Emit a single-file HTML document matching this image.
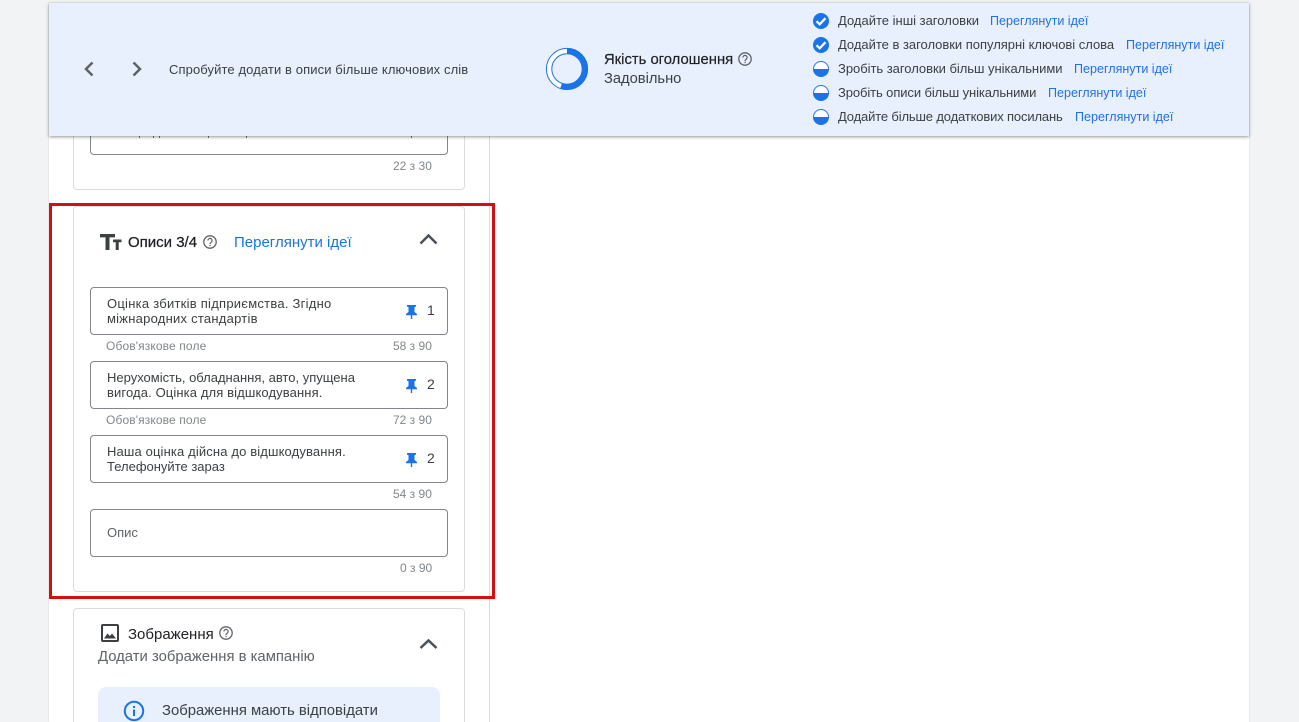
<!DOCTYPE html>
<html lang="uk"><head><meta charset="utf-8"><title>Оголошення</title>
<style>
html,body{margin:0;padding:0;overflow:hidden;width:1299px;height:722px}
#w{position:relative;width:1299px;height:722px;overflow:hidden;background:#f1f3f4;font-family:"Liberation Sans",Arial,sans-serif;color:#3c4043}
.a{position:absolute;white-space:nowrap}
.t{font-size:13px;line-height:16px;color:#3c4043}
.l{font-size:12.55px;line-height:16px;color:#1a73e8}
.c{font-size:12px;line-height:14px;color:#80868b}
.box{position:absolute;left:90px;width:356px;height:46px;border:1px solid #80868b;border-radius:4px;background:#fff}
.card{position:absolute;left:73px;width:390px;border:1px solid #dadce0;border-radius:4px;background:#fff}
.m{position:absolute;top:136px;width:1px;height:2px;background:#5f6368}
svg{position:absolute;display:block}
</style></head><body><div id="w">
<div class="a" style="left:49px;top:3px;width:1200px;height:719px;background:#fff;box-shadow:0 0 1px #bdc1c6"></div>
<div class="a" style="left:489px;top:136px;width:1px;height:586px;background:#dadce0"></div>

<div class="card" style="top:100px;height:88px"></div>
<div class="box" style="top:100px;height:53px"></div>
<div class="m" style="left:139px"></div><div class="m" style="left:153px"></div><div class="m" style="left:159px"></div><div class="m" style="left:208px"></div><div class="m" style="left:246px"></div><div class="m" style="left:411px;background:#1a73e8"></div>
<div class="a c" style="left:393px;top:159px">22 з 30</div>

<div class="card" style="top:206px;height:384px"></div>
<svg style="left:99px;top:233px" width="23" height="18" viewBox="0 0 23 18"><path d="M1 1h15v3.400h-5.500V17H6.500V4.400H1z M14 6.500h8.500v2.700h-2.800V17h-3V9.200H14z" fill="#3c4043"/></svg>
<div class="a" style="left:128px;top:235px;font-size:15px;line-height:16px;color:#202124;-webkit-text-stroke:.25px #202124">Описи 3/4</div>
<svg style="left:202px;top:234px" width="16" height="16" viewBox="0 0 16 16"><circle cx="8" cy="8" r="6.200" fill="none" stroke="#5f6368" stroke-width="1.300"/><path d="M5.900 6.500a2.100 2.100 0 1 1 3.400 1.600c-.8.600-1.300 1-1.300 1.900" fill="none" stroke="#5f6368" stroke-width="1.200"/><rect x="7.400" y="10.800" width="1.300" height="1.300" fill="#5f6368"/></svg>
<div class="a" style="left:234px;top:235px;font-size:15px;line-height:16px;color:#1a73e8">Переглянути ідеї</div>
<svg style="left:418px;top:231px" width="22" height="16" viewBox="0 0 22 16"><path d="M2.500 12.500 10.500 4.500l8 8" fill="none" stroke="#4a5059" stroke-width="2.500"/></svg>

<div class="box" style="top:287px"></div>
<div class="a t" style="left:107px;top:296px;line-height:15px"><span style="letter-spacing:.25px">Оцінка збитків підприємства. Згідно</span><br><span style="letter-spacing:.24px">міжнародних стандартів</span></div>
<svg style="left:405px;top:304px" width="13" height="15" viewBox="0 0 13 15"><path d="M2 1h9v1.500L9.500 3.300V8l2.500 2v1.200H7.200V15H5.800v-3.800H1V10l2.500-2V3.300L2 2.500z" fill="#1a73e8"/></svg>
<div class="a" style="left:427px;top:302px;font-size:14px;line-height:16px;color:#3c4043">1</div>
<div class="a c" style="left:106px;top:339px;letter-spacing:.12px">Обов'язкове поле</div>
<div class="a c" style="left:393px;top:339px">58 з 90</div>

<div class="box" style="top:361px"></div>
<div class="a t" style="left:107px;top:370px;line-height:15px">Нерухомість, обладнання, авто, упущена<br><span style="letter-spacing:.12px">вигода. Оцінка для відшкодування.</span></div>
<svg style="left:405px;top:378px" width="13" height="15" viewBox="0 0 13 15"><path d="M2 1h9v1.500L9.500 3.300V8l2.500 2v1.200H7.200V15H5.800v-3.800H1V10l2.500-2V3.300L2 2.500z" fill="#1a73e8"/></svg>
<div class="a" style="left:427px;top:376px;font-size:14px;line-height:16px;color:#3c4043">2</div>
<div class="a c" style="left:106px;top:413px;letter-spacing:.12px">Обов'язкове поле</div>
<div class="a c" style="left:393px;top:413px">72 з 90</div>

<div class="box" style="top:435px"></div>
<div class="a t" style="left:107px;top:444px;line-height:15px"><span style="letter-spacing:.14px">Наша оцінка дійсна до відшкодування.</span><br>Телефонуйте зараз</div>
<svg style="left:405px;top:452px" width="13" height="15" viewBox="0 0 13 15"><path d="M2 1h9v1.500L9.500 3.300V8l2.500 2v1.200H7.200V15H5.800v-3.800H1V10l2.500-2V3.300L2 2.500z" fill="#1a73e8"/></svg>
<div class="a" style="left:427px;top:450px;font-size:14px;line-height:16px;color:#3c4043">2</div>
<div class="a c" style="left:393px;top:487px">54 з 90</div>

<div class="box" style="top:509px"></div>
<div class="a t" style="left:107px;top:525px;color:#5f6368">Опис</div>
<div class="a c" style="left:400px;top:561px">0 з 90</div>

<div class="a" style="left:49px;top:203px;width:440px;height:390px;border:3px solid #d50f0f"></div>

<div class="card" style="top:608px;height:130px"></div>
<svg style="left:100px;top:623px" width="20" height="20" viewBox="0 0 20 20"><rect x="2" y="2" width="16" height="16" rx="1" fill="none" stroke="#3c4043" stroke-width="2"/><path d="M4 15.500 7.500 10.500l2.500 2.500 2-2.500 4 5z" fill="#3c4043"/></svg>
<div class="a" style="left:128px;top:627px;font-size:15px;line-height:16px;color:#202124">Зображення</div>
<svg style="left:218px;top:625px" width="16" height="16" viewBox="0 0 16 16"><circle cx="8" cy="8" r="6.200" fill="none" stroke="#5f6368" stroke-width="1.300"/><path d="M5.900 6.500a2.100 2.100 0 1 1 3.400 1.600c-.8.600-1.300 1-1.300 1.900" fill="none" stroke="#5f6368" stroke-width="1.200"/><rect x="7.400" y="10.800" width="1.300" height="1.300" fill="#5f6368"/></svg>
<div class="a" style="left:98px;top:649px;font-size:14.850px;line-height:16px;color:#5f6368">Додати зображення в кампанію</div>
<svg style="left:418px;top:636px" width="22" height="16" viewBox="0 0 22 16"><path d="M2.500 12 10.500 4.500l8 7.500" fill="none" stroke="#4a5059" stroke-width="2.500"/></svg>
<div class="a" style="left:98px;top:687px;width:342px;height:50px;border-radius:8px;background:#e8f0fe"></div>
<svg style="left:123px;top:700px" width="22" height="22" viewBox="0 0 22 22"><circle cx="11" cy="11" r="9.200" fill="none" stroke="#1a73e8" stroke-width="2"/><rect x="10" y="9.500" width="2" height="6.500" fill="#1a73e8"/><rect x="10" y="6" width="2" height="2" fill="#1a73e8"/></svg>
<div class="a" style="left:162px;top:703px;font-size:14.850px;line-height:16px;color:#3c4043">Зображення мають відповідати</div>

<div class="a" style="left:49px;top:3px;width:1200px;height:133px;background:#e8f0fe;box-shadow:0 1px 3px rgba(60,64,67,.55)"></div>
<svg style="left:79px;top:59px" width="20" height="20" viewBox="0 0 20 20"><path d="M13.500 3.500 7 10l6.500 6.500" fill="none" stroke="#5f6368" stroke-width="2.500"/></svg>
<svg style="left:127px;top:59px" width="20" height="20" viewBox="0 0 20 20"><path d="M6.500 3.500 13 10l-6.500 6.500" fill="none" stroke="#5f6368" stroke-width="2.500"/></svg>
<div class="a t" style="left:169px;top:62px;letter-spacing:.1px">Спробуйте додати в описи більше ключових слів</div>

<svg style="left:545px;top:47px" width="44" height="44" viewBox="0 0 44 44"><circle cx="22" cy="22" r="18" fill="none" stroke="#fff" stroke-width="6"/><circle cx="22" cy="22" r="18" fill="none" stroke="#1a73e8" stroke-width="6" stroke-dasharray="62.500 120" transform="rotate(-90 22 22)"/><circle cx="22" cy="22" r="20.600" fill="none" stroke="#1a73e8" stroke-width="1"/><circle cx="22" cy="22" r="15.200" fill="none" stroke="#1a73e8" stroke-width="1"/></svg>
<div class="a" style="left:604px;top:52px;font-size:14.800px;line-height:16px;color:#202124;-webkit-text-stroke:.2px #202124">Якість оголошення</div>
<svg style="left:737px;top:51px" width="16" height="16" viewBox="0 0 16 16"><circle cx="8" cy="8" r="6.200" fill="none" stroke="#5f6368" stroke-width="1.300"/><path d="M5.900 6.500a2.100 2.100 0 1 1 3.400 1.600c-.8.600-1.300 1-1.300 1.900" fill="none" stroke="#5f6368" stroke-width="1.200"/><rect x="7.400" y="10.800" width="1.300" height="1.300" fill="#5f6368"/></svg>
<div class="a" style="left:604px;top:71px;font-size:14.700px;line-height:16px;color:#3c4043">Задовільно</div>

<svg style="left:813px;top:13px" width="16" height="16" viewBox="0 0 16 16"><circle cx="8" cy="8" r="8" fill="#1a73e8"/><path d="M3.500 8.200 6.700 11.300 12.500 5.200" fill="none" stroke="#fff" stroke-width="2.300"/></svg>
<div class="a t" style="left:838px;top:13px">Додайте інші заголовки</div>
<div class="a l" style="left:990px;top:13px">Переглянути ідеї</div>

<svg style="left:813px;top:37px" width="16" height="16" viewBox="0 0 16 16"><circle cx="8" cy="8" r="8" fill="#1a73e8"/><path d="M3.500 8.200 6.700 11.300 12.500 5.200" fill="none" stroke="#fff" stroke-width="2.300"/></svg>
<div class="a t" style="left:838px;top:37px;letter-spacing:-.02px">Додайте в заголовки популярні ключові слова</div>
<div class="a l" style="left:1126px;top:37px">Переглянути ідеї</div>

<svg style="left:813px;top:61px" width="16" height="16" viewBox="0 0 16 16"><circle cx="8" cy="8" r="8" fill="#1a73e8"/><path d="M1 8a7 7 0 0 1 14 0z" fill="#fff"/></svg>
<div class="a t" style="left:838px;top:61px;letter-spacing:-.03px">Зробіть заголовки більш унікальними</div>
<div class="a l" style="left:1074px;top:61px">Переглянути ідеї</div>

<svg style="left:813px;top:85px" width="16" height="16" viewBox="0 0 16 16"><circle cx="8" cy="8" r="8" fill="#1a73e8"/><path d="M1 8a7 7 0 0 1 14 0z" fill="#fff"/></svg>
<div class="a t" style="left:838px;top:85px;letter-spacing:-.1px">Зробіть описи більш унікальними</div>
<div class="a l" style="left:1048px;top:85px">Переглянути ідеї</div>

<svg style="left:813px;top:109px" width="16" height="16" viewBox="0 0 16 16"><circle cx="8" cy="8" r="8" fill="#1a73e8"/><path d="M1 8a7 7 0 0 1 14 0z" fill="#fff"/></svg>
<div class="a t" style="left:838px;top:109px;letter-spacing:-.15px">Додайте більше додаткових посилань</div>
<div class="a l" style="left:1075px;top:109px">Переглянути ідеї</div>
</div></body></html>
